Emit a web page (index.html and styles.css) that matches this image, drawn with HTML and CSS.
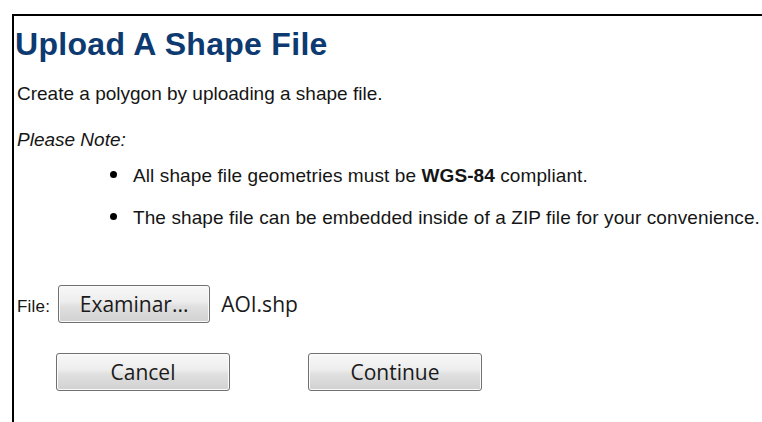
FILE: index.html
```html
<!DOCTYPE html>
<html lang="en">
<head>
<meta charset="utf-8">
<title>Upload A Shape File</title>
<link rel="stylesheet" href="styles.css">
</head>
<body>
  <div class="panel">
    <h1 class="panel-title">Upload A Shape File</h1>
    <p class="intro">Create a polygon by uploading a shape file.</p>
    <p class="note">Please Note:</p>
    <ul class="notes">
      <li class="notes-item">All shape file geometries must be <strong>WGS-84</strong> compliant.</li>
      <li class="notes-item">The shape file can be embedded inside of a ZIP file for your convenience.</li>
    </ul>
    <div class="file-row">
      <span class="file-label">File:</span>
      <button class="btn btn-browse" type="button">Examinar...</button>
      <span class="file-name">AOI.shp</span>
    </div>
    <div class="actions">
      <button class="btn btn-action" type="button">Cancel</button>
      <button class="btn btn-action" type="button">Continue</button>
    </div>
  </div>
</body>
</html>
```
FILE: styles.css
```css
html, body {
  margin: 0;
  padding: 0;
  background: #ffffff;
  overflow: hidden;
}

body {
  font-family: "Liberation Sans", Arial, sans-serif;
  color: #151515;
}

/* framed dialog body: only top and left edges are in view */
.panel {
  margin: 14px 0 0 12px;
  border-top: 2px solid #000;
  border-left: 2px solid #000;
  padding: 10px 0 0 3px;
  height: calc(100vh - 14px);
  box-sizing: border-box;
}

.panel-title {
  margin: 0 0 21px -2px;
  font-size: 32px;
  line-height: 36px;
  font-weight: 700;
  letter-spacing: 0.3px;
  color: #0d3a70;
}

.intro,
.note {
  margin: 0;
  font-size: 19px;
  line-height: 22px;
}

.note {
  margin-top: 24px;
  font-style: italic;
}

.notes {
  list-style: none;
  margin: 14px 0 0 93px;
  padding: 0;
}

.notes-item {
  display: flex;
  align-items: center;
  font-size: 19px;
  line-height: 22px;
  letter-spacing: 0.1px;
  white-space: nowrap;
}

.notes-item + .notes-item {
  margin-top: 20px;
}

.notes-item::before {
  content: "";
  flex: none;
  width: 7px;
  height: 7px;
  margin: -3px 16px 0 0;
  border-radius: 50%;
  background: #000;
}

.notes-item strong {
  font-weight: 700;
  margin: 0 0.28em;
}

.file-row {
  display: flex;
  align-items: baseline;
  margin-top: 56px;
}

.file-label {
  font-size: 17px;
  letter-spacing: 0.2px;
}

.file-name {
  margin-left: 11px;
  font-family: "Open Sans", sans-serif;
  font-size: 21px;
  color: #1a1a1a;
}

.btn {
  box-sizing: border-box;
  height: 38px;
  padding: 0;
  border: 1px solid #707070;
  border-radius: 3px;
  background: linear-gradient(#f8f8f8 0%, #ededed 44%, #e0e0e0 56%, #d1d1d1 100%);
  box-shadow: inset 0 0 0 1px #fbfbfb;
  font-family: "Open Sans", sans-serif;
  font-size: 21px;
  line-height: 36px;
  color: #1a1a1a;
}

.btn-browse {
  width: 152px;
  margin-left: 8px;
}

.actions {
  display: flex;
  gap: 78px;
  margin: 30px 0 0 39px;
}

.btn-action {
  width: 174px;
}
```
